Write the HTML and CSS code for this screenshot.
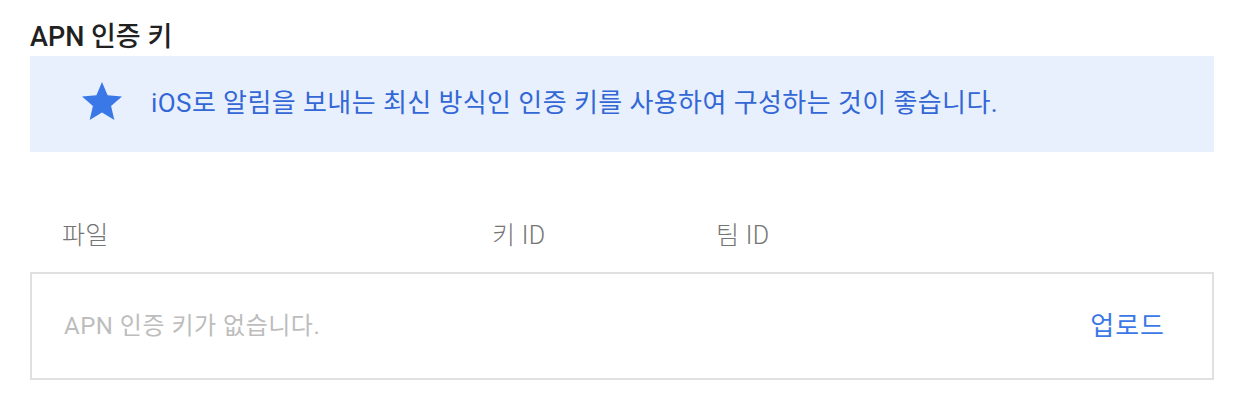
FILE: index.html
```html
<!DOCTYPE html>
<html lang="ko">
<head>
<meta charset="utf-8">
<link rel="stylesheet" href="styles.css">
</head>
<body>
<section class="apns">
  <h2 class="title">APN 인증 키</h2>
  <div class="banner">
    <svg class="star" viewBox="0 0 24 24" width="48" height="48" aria-hidden="true"><path d="M12 17.27L18.18 21l-1.64-7.03L22 9.24l-7.19-.61L12 2 9.19 8.63 2 9.24l5.46 4.73L5.82 21z"/></svg>
    <span class="banner-text">iOS로 알림을 보내는 최신 방식인 인증 키를 사용하여 구성하는 것이 좋습니다.</span>
  </div>
  <div class="table-head">
    <span>파일</span>
    <span>키 ID</span>
    <span>팀 ID</span>
  </div>
  <div class="table-body">
    <span class="empty">APN 인증 키가 없습니다.</span>
    <span class="upload">업로드</span>
  </div>
</section>
</body>
</html>
```
FILE: styles.css
```css
html, body {
  margin: 0;
  padding: 0;
  background: #ffffff;
}
body {
  font-family: Roboto, "Noto Sans CJK KR", sans-serif;
  font-size: 24px;
}
.apns {
  width: 1184px;
  padding-left: 30px;
}
.title {
  margin: 0;
  padding-top: 21px;
  height: 35px;
  line-height: 32px;
  font-size: 27px;
  font-weight: 500;
  color: #212121;
}
.banner {
  display: flex;
  align-items: center;
  height: 96px;
  padding-left: 48px;
  background: #e8f0fd;
  box-sizing: border-box;
}
.star {
  flex: none;
  fill: #3b78e7;
  margin-top: -4px;
}
.banner-text {
  margin-left: 25px;
  color: #3367d6;
  font-size: 26px;
  letter-spacing: 0.42px;
  line-height: 32px;
  margin-top: -3px;
}
.table-head {
  display: grid;
  grid-template-columns: 430px 224px 1fr;
  align-items: center;
  height: 72px;
  margin-top: 48px;
  padding-left: 32px;
  color: #757575;
  font-size: 25px;
  font-weight: 300;
  letter-spacing: 0.3px;
  line-height: 32px;
}
.table-body {
  display: flex;
  align-items: center;
  justify-content: space-between;
  height: 108px;
  box-sizing: border-box;
  border: 2px solid #e0e0e0;
  padding: 0 48px 0 32px;
  line-height: 32px;
}
.empty {
  color: #bdbdbd;
  letter-spacing: 0.5px;
}
.upload {
  color: #3b78e7;
  font-size: 26px;
  letter-spacing: 1px;
  margin-right: -1px;
  cursor: pointer;
}
```
